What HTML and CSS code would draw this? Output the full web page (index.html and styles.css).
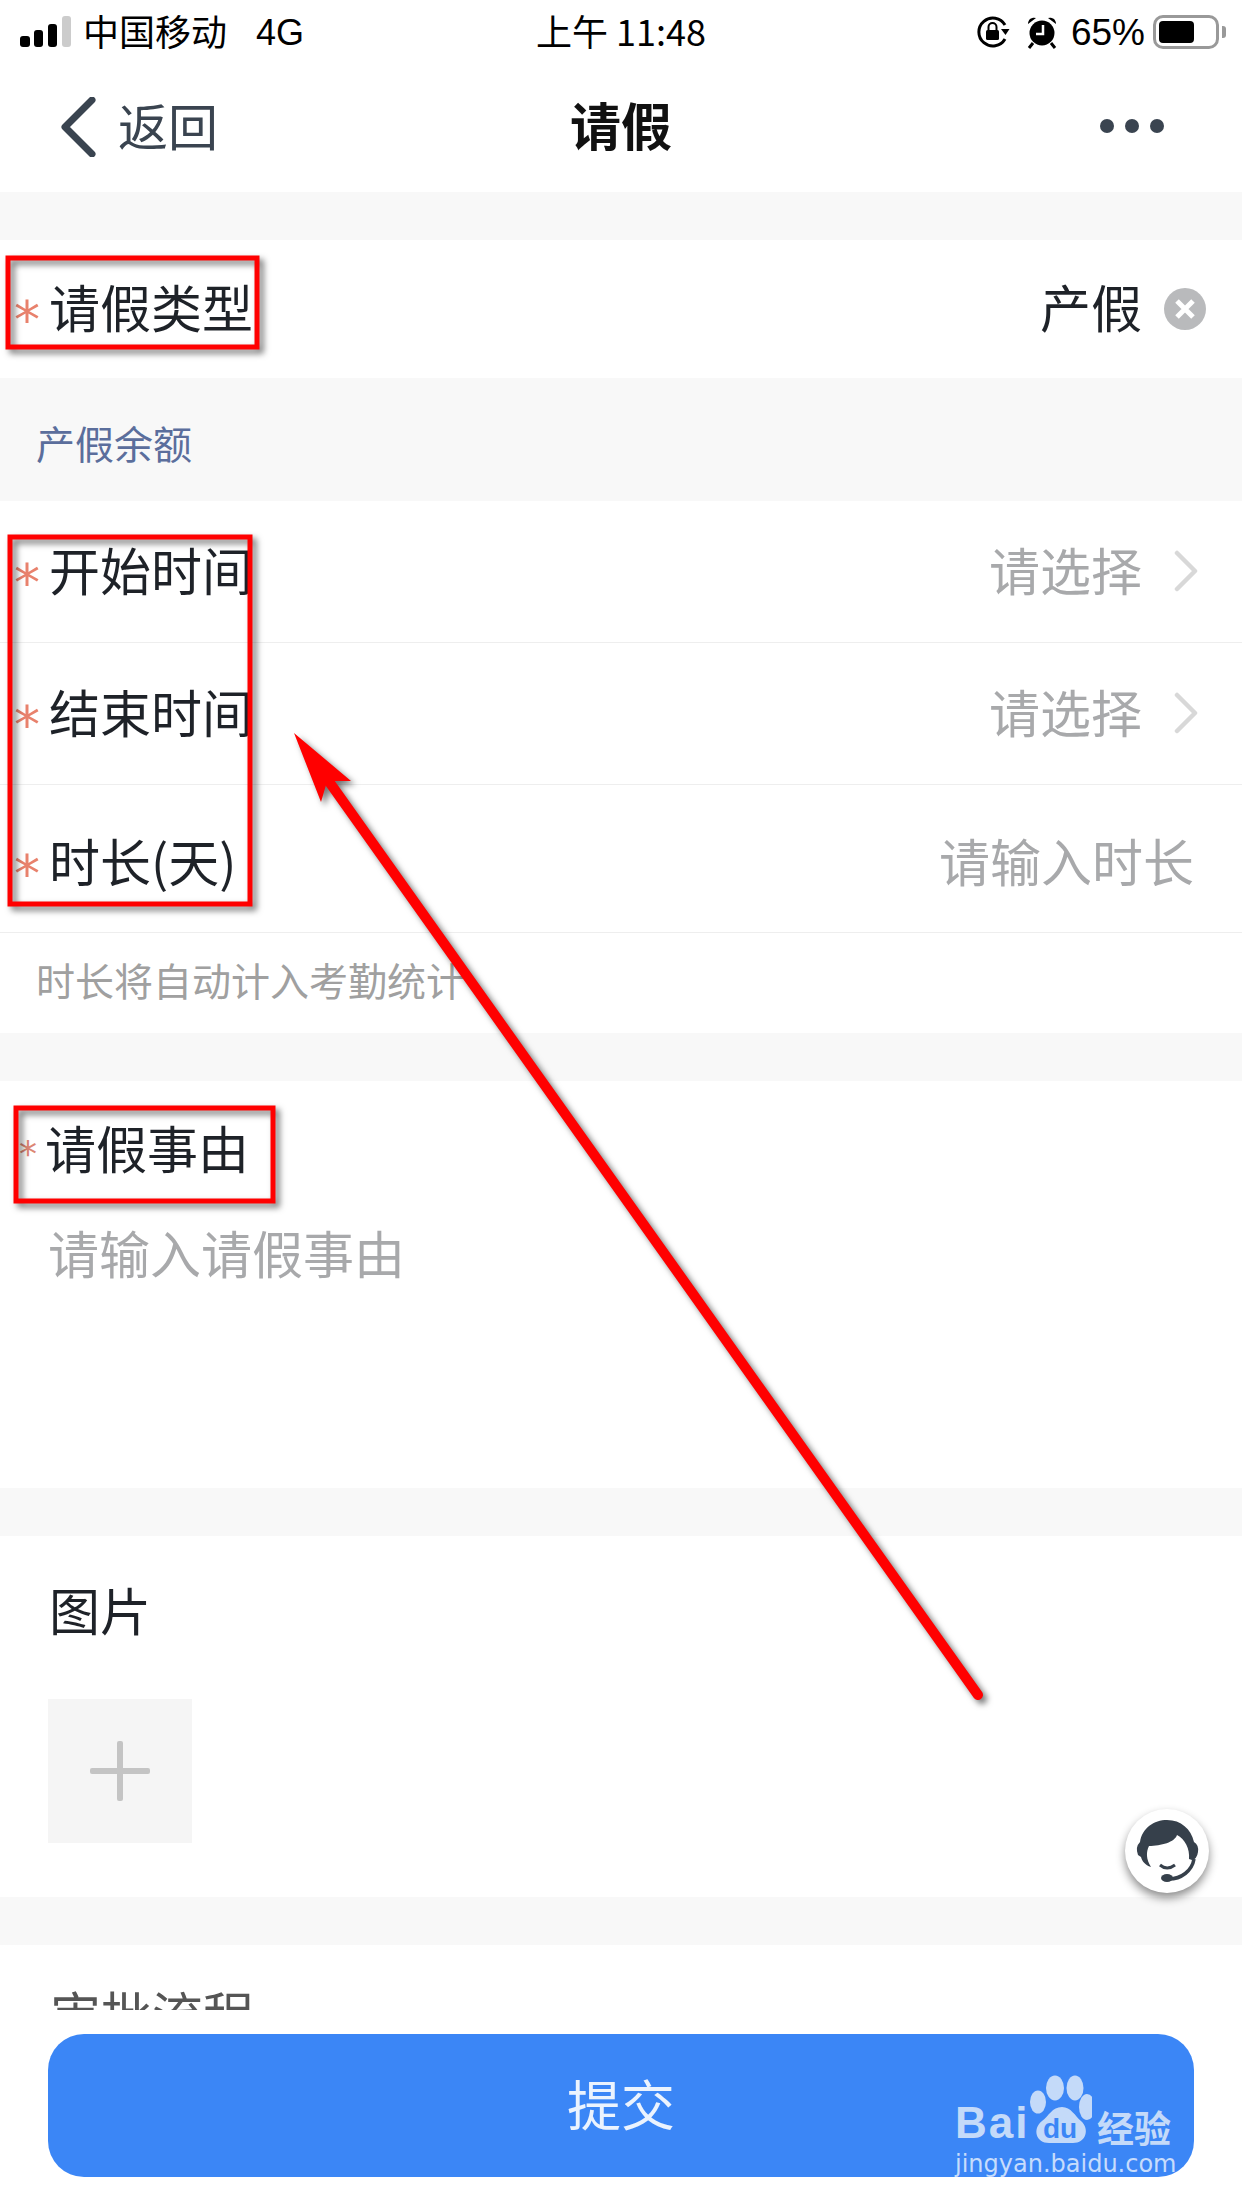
FILE: index.html
```html
<!DOCTYPE html>
<html lang="zh-CN">
<head>
    <meta charset="UTF-8">
    <meta name="viewport" content="width=device-width, initial-scale=1.0">
    <title>请假</title>
    <link rel="stylesheet" href="styles.css">
</head>
<body>
<div class="page">

    <div class="status-bar">
        <div class="status-left">
            <svg class="signal" width="52" height="32" viewBox="0 0 52 32">
                <rect x="0" y="20" width="10" height="11" rx="3" fill="#000"/>
                <rect x="14" y="14" width="9" height="17" rx="3" fill="#000"/>
                <rect x="28" y="8" width="9" height="23" rx="3" fill="#000"/>
                <rect x="42" y="0" width="9" height="31" rx="3" fill="#ccc"/>
            </svg>
            <span class="carrier">中国移动</span>
            <span class="network">4G</span>
        </div>
        <div class="status-time">上午 11:48</div>
        <div class="status-right">
            <svg class="lock-icon" width="34" height="34" viewBox="0 0 34 34">
                <path d="M29 10 A14 14 0 1 0 29 24" fill="none" stroke="#000" stroke-width="3"/>
                <path d="M25 14 L33.500 14 L29.500 20z" fill="#000"/>
                <rect x="10" y="15" width="13" height="10" rx="1.5" fill="#000"/>
                <path d="M12.500 15 V12 a4 4 0 0 1 8 0 V15" fill="none" stroke="#000" stroke-width="2"/>
            </svg>
            <svg class="alarm-icon" width="32" height="34" viewBox="0 0 32 34">
                <circle cx="16" cy="18" r="12.500" fill="#000"/>
                <path d="M2 9 a6 6 0 0 1 8 -6z M30 9 a6 6 0 0 0 -8 -6z" fill="#000"/>
                <path d="M7 28 L3 33 M25 28 L29 33" stroke="#000" stroke-width="3"/>
                <path d="M17 10 V19 H10" fill="none" stroke="#fff" stroke-width="2.500"/>
            </svg>
            <span class="battery-text">65%</span>
            <div class="battery"><div class="battery-fill"></div></div>
            <div class="battery-nub"></div>
        </div>
    </div>

    <div class="nav-bar">
        <div class="nav-back">
            <svg width="36" height="60" viewBox="0 0 36 60">
                <path d="M32 3 L5 30 L32 57" fill="none" stroke="#3a4450" stroke-width="7" stroke-linecap="round" stroke-linejoin="round"/>
            </svg>
            <span>返回</span>
        </div>
        <div class="nav-title">请假</div>
        <div class="nav-more"><i></i><i></i><i></i></div>
    </div>

    <div class="gap"></div>

    <div class="row row-type">
        <div class="label"><span class="star">*</span>请假类型</div>
        <div class="value">
            <span>产假</span>
            <svg class="clear-icon" width="42" height="42" viewBox="0 0 42 42">
                <circle cx="21" cy="21" r="21" fill="#b9babc"/>
                <path d="M13 13 L29 29 M29 13 L13 29" stroke="#fff" stroke-width="5"/>
            </svg>
        </div>
    </div>

    <div class="balance">产假余额</div>

    <div class="row">
        <div class="label"><span class="star">*</span>开始时间</div>
        <div class="value placeholder">
            <span>请选择</span>
            <svg class="chevron" width="24" height="42" viewBox="0 0 24 42">
                <path d="M3 3 L21 21 L3 39" fill="none" stroke="#d8d8d8" stroke-width="4.500" stroke-linecap="round" stroke-linejoin="round"/>
            </svg>
        </div>
    </div>
    <div class="row">
        <div class="label"><span class="star">*</span>结束时间</div>
        <div class="value placeholder">
            <span>请选择</span>
            <svg class="chevron" width="24" height="42" viewBox="0 0 24 42">
                <path d="M3 3 L21 21 L3 39" fill="none" stroke="#d8d8d8" stroke-width="4.500" stroke-linecap="round" stroke-linejoin="round"/>
            </svg>
        </div>
    </div>
    <div class="row row-duration">
        <div class="label"><span class="star">*</span>时长(天)</div>
        <div class="value placeholder"><span>请输入时长</span></div>
    </div>
    <div class="hint">时长将自动计入考勤统计</div>

    <div class="gap"></div>

    <div class="block block-reason">
        <div class="label reason-label"><span class="star star-small">*</span>请假事由</div>
        <div class="reason-input">请输入请假事由</div>
    </div>

    <div class="gap"></div>

    <div class="block block-image">
        <div class="block-title">图片</div>
        <div class="add-tile"><span class="plus"></span></div>
    </div>

    <div class="gap"></div>

    <div class="block-clip">审批流程</div>

    <div class="footer">
        <button class="submit">提交</button>
    </div>

    <div class="support">
        <svg width="84" height="84" viewBox="0 0 84 84">
            <path d="M13 46 q-3 -8 2 -13 C17 19 29 11 42 11 C56 11 66 20 69 33 q5 3 4 10 q-1 7 -6 8 l-3 -1 C65 40 60 30 52 26 C50 33 36 37 24 37 C21 43 21 50 26 58 C20 56 17 52 16 48z" fill="#36404b"/>
            <path d="M35 56 q7 6 15 0" fill="none" stroke="#36404b" stroke-width="3"/>
            <path d="M69 50 C67 62 56 70 44 70" fill="none" stroke="#36404b" stroke-width="3.500"/>
            <ellipse cx="42" cy="69" rx="6" ry="4" fill="#36404b"/>
        </svg>
    </div>

    <div class="watermark">
        <div class="wm-top">
            <span class="wm-bai">Bai</span>
            <svg class="wm-paw" width="62" height="74" viewBox="0 0 62 74">
                <ellipse cx="25" cy="14" rx="9" ry="12.500" fill="#c4daf9"/>
                <ellipse cx="45" cy="14" rx="8.500" ry="12.500" fill="#c4daf9"/>
                <ellipse cx="8" cy="28" rx="8" ry="11.500" fill="#c4daf9"/>
                <ellipse cx="57" cy="33" rx="8" ry="13" fill="#c4daf9"/>
                <path d="M32 33 C41 33 45 42 51 47 C60 55 56 69 43 69 C36 69 28 69 19 69 C6 69 2 55 12 47 C19 42 22 33 32 33z" fill="#c4daf9"/>
                <text x="30" y="64" text-anchor="middle" class="wm-du">du</text>
            </svg>
            <span class="wm-cn">经验</span>
        </div>
        <div class="wm-url">jingyan.baidu.com</div>
    </div>

    <svg class="annotations" width="1242" height="2208" viewBox="0 0 1242 2208">
        <g fill="none" stroke="#ff0000" stroke-width="5">
            <rect x="8" y="258" width="249" height="89"/>
            <rect x="10" y="537" width="240" height="367"/>
            <rect x="16" y="1108" width="257" height="93"/>
        </g>
        <path d="M294 733 L351 781 L333 781 L326 785 L321 802z" fill="#ff0000"/>
        <path d="M330 783 L978 1695" fill="none" stroke="#ff0000" stroke-width="10" stroke-linecap="round"/>
    </svg>

</div>
</body>
</html>
```

FILE: styles.css
```css
* { box-sizing: border-box; }
body { margin: 0; background: #fff; font-family: "Noto Sans CJK SC", "Liberation Sans", sans-serif; color: #1e2228; }
.page { position: relative; width: 1242px; height: 2208px; overflow: hidden; background: #fff; }

.status-bar { display: grid; grid-template-columns: 1fr auto 1fr; align-items: center; height: 64px; padding: 0 16px; font-family: "Liberation Sans", "Noto Sans CJK SC", sans-serif; color: #000; }
.status-left { display: flex; align-items: center; padding-left: 4px; }
.carrier { margin: 0 0 4px 11px; font-family: "Noto Sans CJK SC", sans-serif; font-size: 36px; }
.network { margin: 2px 0 0 29px; font-size: 36px; }
.status-time { margin-bottom: 4px; font-size: 36px; font-family: "Noto Sans CJK SC", sans-serif; }
.status-right { display: flex; align-items: center; justify-content: flex-end; }
.alarm-icon { margin-left: 16px; }
.battery-text { margin: 1px 0 0 13px; font-size: 37px; }
.battery { width: 66px; height: 34px; margin-left: 8px; padding: 3px; border: 3px solid #999; border-radius: 10px; }
.battery-fill { width: 35px; height: 22px; background: #000; border-radius: 4px; }
.battery-nub { width: 4px; height: 12px; margin-left: 3px; background: #999; border-radius: 0 3px 3px 0; }

.nav-bar { display: grid; grid-template-columns: 1fr auto 1fr; align-items: center; height: 128px; padding: 0 78px 8px; }
.nav-back { display: flex; align-items: center; gap: 22px; margin-left: -18px; font-size: 50px; color: #3a4450; }
.nav-back svg { margin-top: 6px; }
.nav-title { font-size: 51px; font-weight: 700; color: #111; }
.nav-more { display: flex; justify-content: flex-end; gap: 11px; margin-top: 4px; }
.nav-more i { width: 14px; height: 14px; border-radius: 50%; background: #3a4450; }

.gap { height: 48px; background: #f8f8f8; }

.row { display: flex; align-items: center; justify-content: space-between; height: 142px; padding: 0 44px 6px 14px; border-bottom: 1px solid #eeeeee; }
.row-type { height: 138px; padding-right: 36px; border-bottom: 0; }
.row-duration { height: 148px; padding: 2px 48px 0 14px; }
.label { display: flex; align-items: center; font-size: 51px; line-height: 70px; }
.star { width: 35px; height: 70px; font-family: "DejaVu Sans", sans-serif; font-size: 52px; line-height: 99px; color: #e8816c; }
.star-small { width: 26px; font-size: 36px; line-height: 84px; color: #dc8674; }
.value { display: flex; align-items: center; font-size: 51px; }
.placeholder { color: #a8a9ab; }
.clear-icon { margin: 6px 0 0 22px; }
.chevron { margin: 4px 0 0 32px; }

.balance { height: 123px; padding: 0 36px; background: #f8f8f8; color: #5b6e9c; font-size: 39px; line-height: 129px; }
.hint { height: 100px; padding: 0 36px; color: #a0a0a0; font-size: 39px; line-height: 92px; }

.block { padding: 31px 50px 0; }
.block-reason { height: 407px; }
.reason-label { margin-left: -31px; }
.reason-input { margin: 35px 0 0 -2px; font-size: 51px; line-height: 70px; color: #a8a9ab; }
.block-image { height: 361px; padding: 38px 48px 0; }
.block-title { padding-left: 1px; font-size: 51px; line-height: 70px; }
.add-tile { display: flex; align-items: center; justify-content: center; width: 144px; height: 144px; margin-top: 55px; background: #f5f5f5; }
.plus { position: relative; width: 60px; height: 60px; }
.plus::before, .plus::after { content: ""; position: absolute; background: #c4c4c4; border-radius: 2px; }
.plus::before { left: 0; top: 27px; width: 60px; height: 6px; }
.plus::after { left: 27px; top: 0; width: 6px; height: 60px; }

.block-clip { height: 65px; padding: 33px 50px 0; overflow: hidden; font-size: 51px; line-height: 70px; color: #555; }

.footer { height: 198px; padding: 24px 48px 0; background: #fff; }
.submit { display: block; width: 100%; height: 143px; padding: 0 0 6px; border: 0; border-radius: 36px; background: #3b86f6; color: rgba(255,255,255,0.9); font-family: inherit; font-size: 54px; }

.support { position: absolute; left: 1125px; top: 1809px; width: 84px; height: 84px; border-radius: 50%; background: #fff; box-shadow: 0 5px 10px rgba(0,0,0,0.45); }
.support svg { display: block; }

.watermark { position: absolute; left: 955px; top: 2074px; color: #c4daf9; }
.wm-top { display: flex; align-items: flex-end; height: 74px; }
.wm-bai { width: 75px; font-family: "Liberation Sans", sans-serif; font-size: 44px; font-weight: 700; line-height: 50px; letter-spacing: 2px; }
.wm-paw { display: block; margin-right: 5px; }
.wm-du { font-family: "Liberation Sans", sans-serif; font-size: 28px; font-weight: 700; fill: #3b86f6; }
.wm-cn { font-size: 37px; font-weight: 700; line-height: 42px; }
.wm-url { font-family: "DejaVu Sans", sans-serif; font-size: 24px; line-height: 32px; color: rgba(255,255,255,0.72); white-space: nowrap; }

.annotations { position: absolute; left: 0; top: 0; filter: drop-shadow(4px 4px 3px rgba(0,0,0,0.55)); }
```
